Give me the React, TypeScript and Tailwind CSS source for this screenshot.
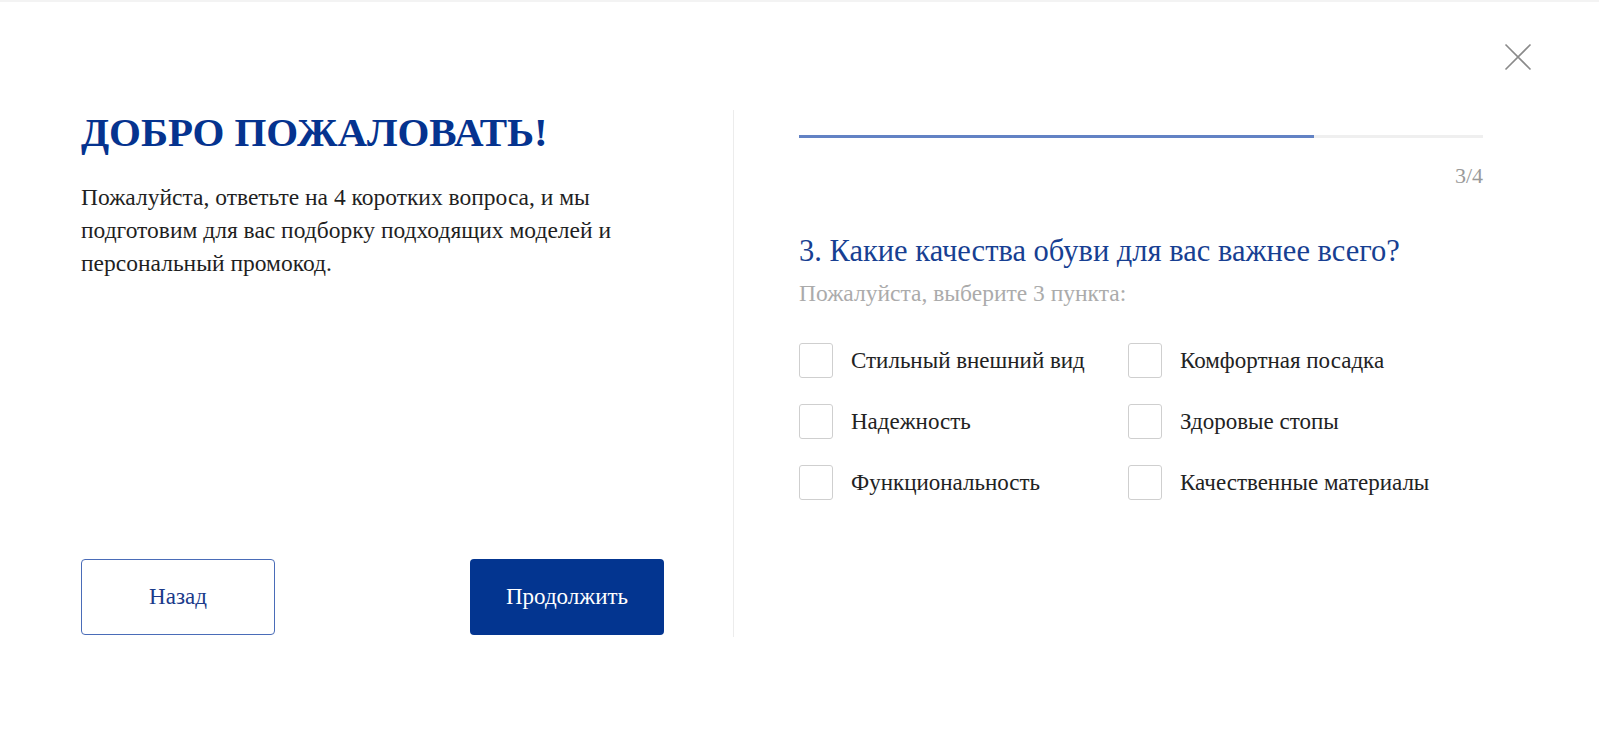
const options = [
  "Стильный внешний вид",
  "Комфортная посадка",
  "Надежность",
  "Здоровые стопы",
  "Функциональность",
  "Качественные материалы",
];

export default function App() {
  return (
    <div
      className="relative w-[1599px] h-[733px] bg-white border-t-2 border-[#f3f3f3] overflow-hidden"
      style={{ fontFamily: '"Liberation Serif", "Times New Roman", serif' }}
    >
      {/* Close */}
      <button type="button" className="absolute left-[1504px] top-[41px] text-[#8a8a8a]">
        <svg width="28" height="28" viewBox="0 0 28 28" fill="none" stroke="currentColor" strokeWidth="1.6">
          <path d="M1.5 1.5 L26.5 26.5 M26.5 1.5 L1.5 26.5" />
        </svg>
      </button>

      <div className="flex pl-[81px] pt-[108px]">
        {/* Left column */}
        <div className="w-[583px] h-[525px] flex flex-col justify-between">
          <div>
            <h1 className="text-[41px] font-bold leading-none text-[#05338f] mt-[2px] tracking-[-0.1px]">
              ДОБРО ПОЖАЛОВАТЬ!
            </h1>
            <p className="mt-[28px] text-[23.5px] leading-[33px] text-[#1f1f1f] w-[570px]">
              Пожалуйста, ответьте на 4 коротких вопроса, и мы подготовим для вас подборку подходящих моделей и
              персональный промокод.
            </p>
          </div>
          <div className="flex justify-between">
            <button
              type="button"
              className="w-[194px] h-[76px] border-[1.5px] border-[#4a6cb8] rounded-[4px] text-[23px] text-[#1a3a8a]"
            >
              Назад
            </button>
            <button
              type="button"
              className="w-[194px] h-[76px] bg-[#033590] rounded-[4px] text-[23px] text-white"
            >
              Продолжить
            </button>
          </div>
        </div>

        {/* Divider */}
        <div className="ml-[69px] w-px h-[527px] bg-[#ececec]" />

        {/* Right column */}
        <div className="ml-[65px] w-[684px] pt-[25px]">
          <div className="h-[3px] bg-[#efefef]">
            <div className="h-full bg-[#6282c4]" style={{ width: "75.3%" }} />
          </div>
          <div className="mt-[27px] text-right text-[22px] leading-none text-[#9a9a9a]">3/4</div>
          <h2 className="mt-[49px] text-[30.5px] leading-none text-[#173f92]">
            3. Какие качества обуви для вас важнее всего?
          </h2>
          <p className="mt-[15px] text-[23.5px] leading-none text-[#ababab]">Пожалуйста, выберите 3 пункта:</p>

          <div className="mt-[38px] grid grid-cols-[329px_1fr] gap-y-[26px]">
            {options.map((o) => (
              <label key={o} className="flex items-center gap-[18px] cursor-pointer">
                <span className="w-[34px] h-[35px] border border-[#cfcfcf] rounded-[3px] shrink-0" />
                <span className="text-[23px] leading-none text-[#222]">{o}</span>
              </label>
            ))}
          </div>
        </div>
      </div>
    </div>
  );
}
